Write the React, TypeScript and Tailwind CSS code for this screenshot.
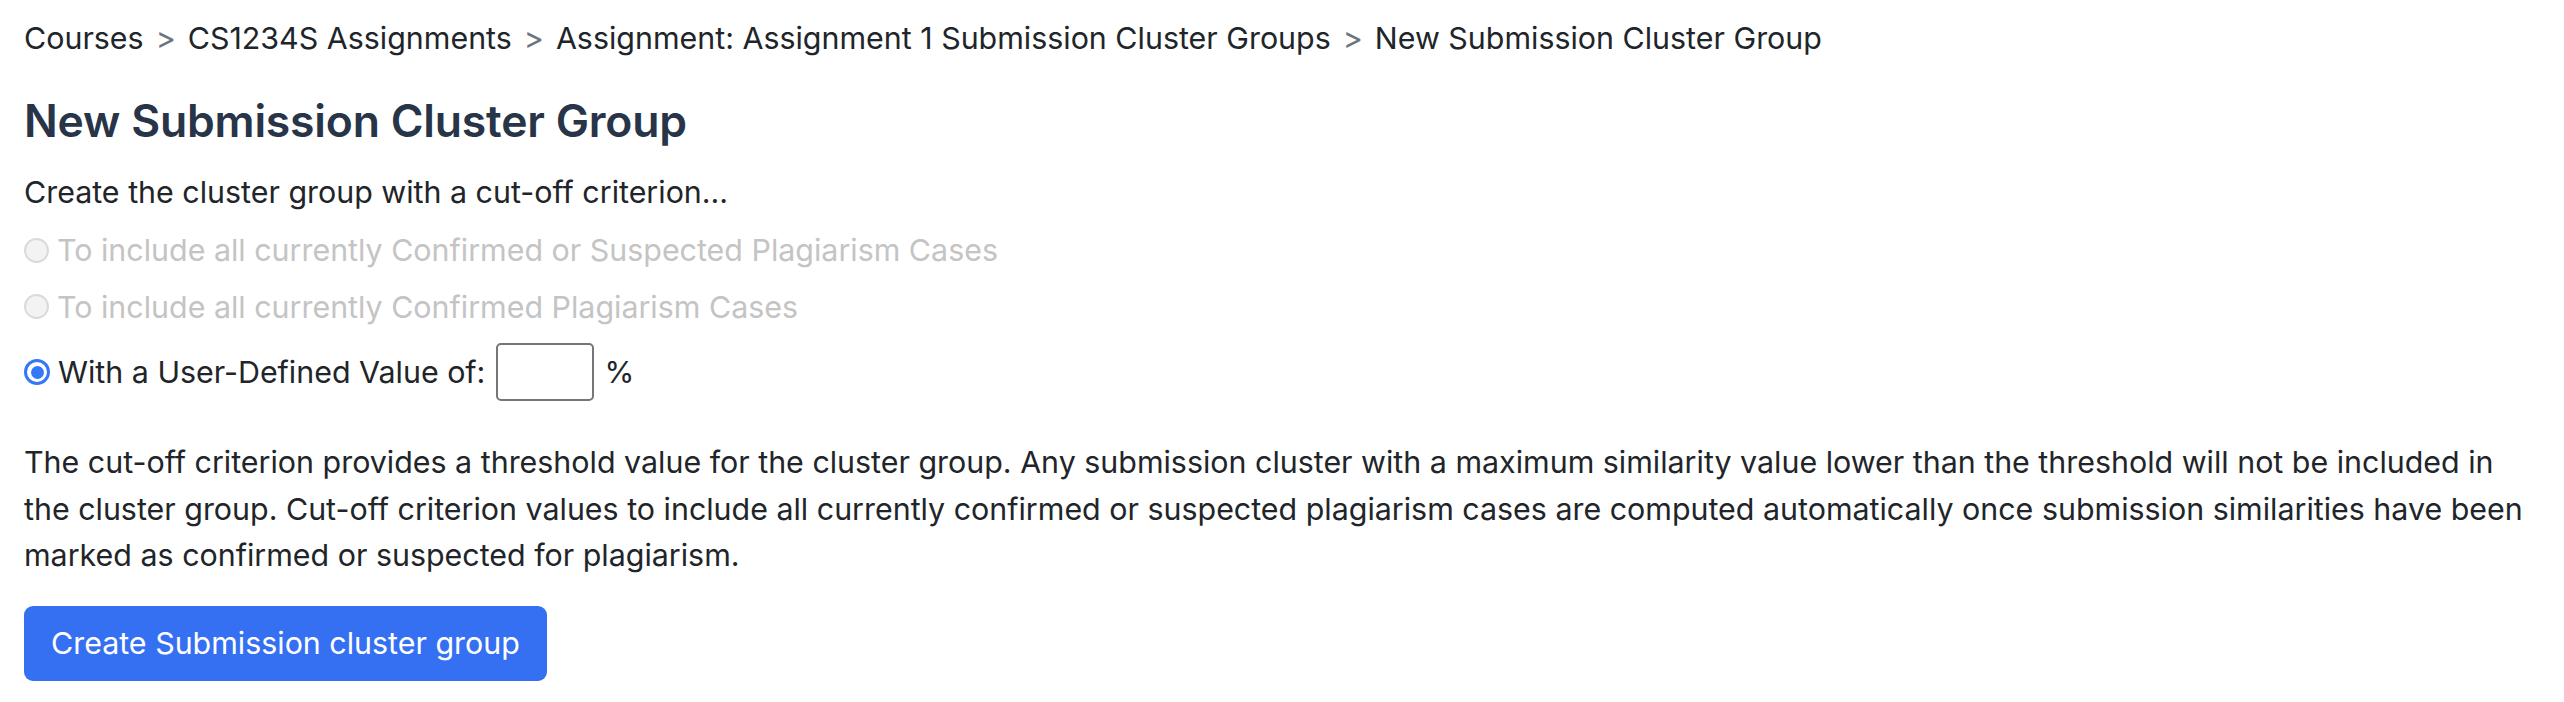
import { useState } from "react";

const crumbs = [
  "Courses",
  "CS1234S Assignments",
  "Assignment: Assignment 1 Submission Cluster Groups",
  "New Submission Cluster Group",
];

const options = [
  { id: "both", label: "To include all currently Confirmed or Suspected Plagiarism Cases", disabled: true },
  { id: "confirmed", label: "To include all currently Confirmed Plagiarism Cases", disabled: true },
];

const Radio = ({ checked, disabled }: { checked?: boolean; disabled?: boolean }) => {
  if (checked) {
    return (
      <span className="flex items-center justify-center w-[26px] h-[26px] rounded-full border-[3px] border-[#3478f6] bg-white shrink-0">
        <span className="w-[13px] h-[13px] rounded-full bg-[#3478f6]" />
      </span>
    );
  }
  return (
    <span
      className={`w-[25px] h-[25px] rounded-full border-2 shrink-0 ${disabled ? "border-[#dadada] bg-[#f3f3f3]" : "border-[#8a8a8a] bg-white"}`}
    />
  );
};

export default function App() {
  const [value, setValue] = useState("");

  return (
    <div
      className="min-h-screen bg-white px-[24px] pt-[15px] text-[30.4px] leading-[46.5px] text-[#212529]"
      style={{ fontFamily: "Inter, 'Noto Sans', sans-serif" }}
    >
      <nav className="flex items-center">
        {crumbs.map((c, i) => (
          <span key={c} className="flex items-center">
            {i > 0 && <span className="px-[12px] text-[#6c757d]">&gt;</span>}
            <span>{c}</span>
          </span>
        ))}
      </nav>

      <h1 className="mt-[31px] text-[44.5px] leading-[56px] font-semibold tracking-[-0.2px] text-[#283447]">
        New Submission Cluster Group
      </h1>

      <p className="mt-[20px]">Create the cluster group with a cut-off criterion...</p>

      <div className="mt-[12px] flex flex-col gap-[10px]">
        {options.map((o) => (
          <label key={o.id} className="flex items-center gap-[8px] text-[#c4c4c4]">
            <Radio disabled={o.disabled} />
            <span>{o.label}</span>
          </label>
        ))}
        <label className="mt-[3px] flex items-center gap-[8px]">
          <Radio checked />
          <span>With a User-Defined Value of:</span>
          <input
            value={value}
            onChange={(e) => setValue(e.target.value)}
            className="ml-[3px] w-[98px] h-[58px] rounded-[5px] border-2 border-[#767676] bg-white outline-none px-2"
          />
          <span className="ml-[2px]">%</span>
        </label>
      </div>

      <p className="mt-[38px]">
        The cut-off criterion provides a threshold value for the cluster group. Any submission cluster with a
        maximum similarity value lower than the threshold will not be included in the cluster group. Cut-off
        criterion values to include all currently confirmed or suspected plagiarism cases are computed
        automatically once submission similarities have been marked as confirmed or suspected for plagiarism.
      </p>

      <button className="mt-[27px] h-[75px] px-[27px] rounded-[9px] bg-[#3570f2] text-white">
        Create Submission cluster group
      </button>
    </div>
  );
}
